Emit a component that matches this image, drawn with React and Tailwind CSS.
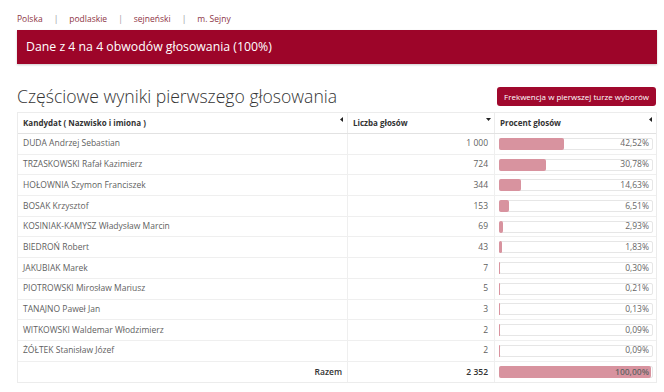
const rows = [
  ['DUDA Andrzej Sebastian', '1 000', 42.52],
  ['TRZASKOWSKI Rafał Kazimierz', '724', 30.78],
  ['HOŁOWNIA Szymon Franciszek', '344', 14.63],
  ['BOSAK Krzysztof', '153', 6.51],
  ['KOSINIAK-KAMYSZ Władysław Marcin', '69', 2.93],
  ['BIEDROŃ Robert', '43', 1.83],
  ['JAKUBIAK Marek', '7', 0.3],
  ['PIOTROWSKI Mirosław Mariusz', '5', 0.21],
  ['TANAJNO Paweł Jan', '3', 0.13],
  ['WITKOWSKI Waldemar Włodzimierz', '2', 0.09],
  ['ŻÓŁTEK Stanisław Józef', '2', 0.09],
];

const fmt = (v) => v.toFixed(2).replace('.', ',') + '%';

function Bar({ value }) {
  return (
    <div className="relative h-[12px] w-full rounded-[2px] border border-[#e6e6e6] bg-white">
      <div className="absolute -left-px -top-px h-[12px] rounded-[2px] bg-[#d8939f]" style={{ width: `${value}%` }} />
      <span className="relative z-10 flex h-full items-center justify-end pr-[3px] text-[8.5px] text-[#666]">{fmt(value)}</span>
    </div>
  );
}

function Arrow({ down }) {
  return (
    <svg width="5" height="5" viewBox="0 0 5 5" className="absolute right-[3px] top-[4px]">
      {down ? <path d="M0 1h5L2.5 4z" fill="#222" /> : <path d="M4 0v5L1 2.5z" fill="#222" />}
    </svg>
  );
}

export default function App() {
  return (
    <div className="h-[392px] w-[664px] overflow-hidden bg-white pl-[17px] pt-[13px] font-['Open_Sans',sans-serif] text-[#5f5f5f]">
      <div className="flex h-[12px] items-center gap-[11px] text-[8.5px] leading-[12px] text-[#8e3446]">
        <span>Polska</span>
        <span className="text-[#999]">|</span>
        <span>podlaskie</span>
        <span className="text-[#999]">|</span>
        <span>sejneński</span>
        <span className="text-[#999]">|</span>
        <span>m. Sejny</span>
      </div>

      <div className="mt-[5px] flex h-[34px] w-[640px] items-center bg-[#9d0529] pl-[9px] text-[12.3px] text-white shadow-[0_1px_2px_rgba(0,0,0,0.2)]">
        Dane z 4 na 4 obwodów głosowania (100%)
      </div>

      <div className="mt-[23px] flex h-[19px] w-[640px] items-center justify-between">
        <h1 className="text-[17.6px] font-light leading-none text-[#333]">Częściowe wyniki pierwszego głosowania</h1>
        <button className="mr-[1px] h-[19px] rounded-[3px] bg-[#a0082d] px-[7px] text-[8px] text-white">
          Frekwencja w pierwszej turze wyborów
        </button>
      </div>

      <div className="mt-[6px] w-[640px] border border-[#ececec] text-[8.5px]">
        <div className="grid h-[21px] grid-cols-[330px_147px_1fr] border-b border-[#e2e2e2] text-[8px] font-bold text-[#333]">
          <div className="relative flex items-center border-r border-[#ececec] pl-[5px]">Kandydat ( Nazwisko i imiona )<Arrow /></div>
          <div className="relative flex items-center border-r border-[#ececec] pl-[5px]">Liczba głosów<Arrow down /></div>
          <div className="relative flex items-center pl-[5px]">Procent głosów<Arrow /></div>
        </div>
        {rows.map(([name, votes, pct]) => (
          <div key={name} className="grid h-[20.7px] grid-cols-[330px_147px_1fr] border-b border-[#efefef]">
            <div className="flex items-center border-r border-[#efefef] pl-[5px]">{name}</div>
            <div className="flex items-center justify-end border-r border-[#efefef] pr-[6px]">{votes}</div>
            <div className="flex items-center pl-[4px] pr-[3px]"><Bar value={pct} /></div>
          </div>
        ))}
        <div className="grid h-[20.7px] grid-cols-[330px_147px_1fr] font-semibold text-[#333]">
          <div className="flex items-center justify-end border-r border-[#efefef] pr-[5px]">Razem</div>
          <div className="flex items-center justify-end border-r border-[#efefef] pr-[6px]">2 352</div>
          <div className="flex items-center pl-[4px] pr-[3px]"><Bar value={100} /></div>
        </div>
      </div>
    </div>
  );
}
